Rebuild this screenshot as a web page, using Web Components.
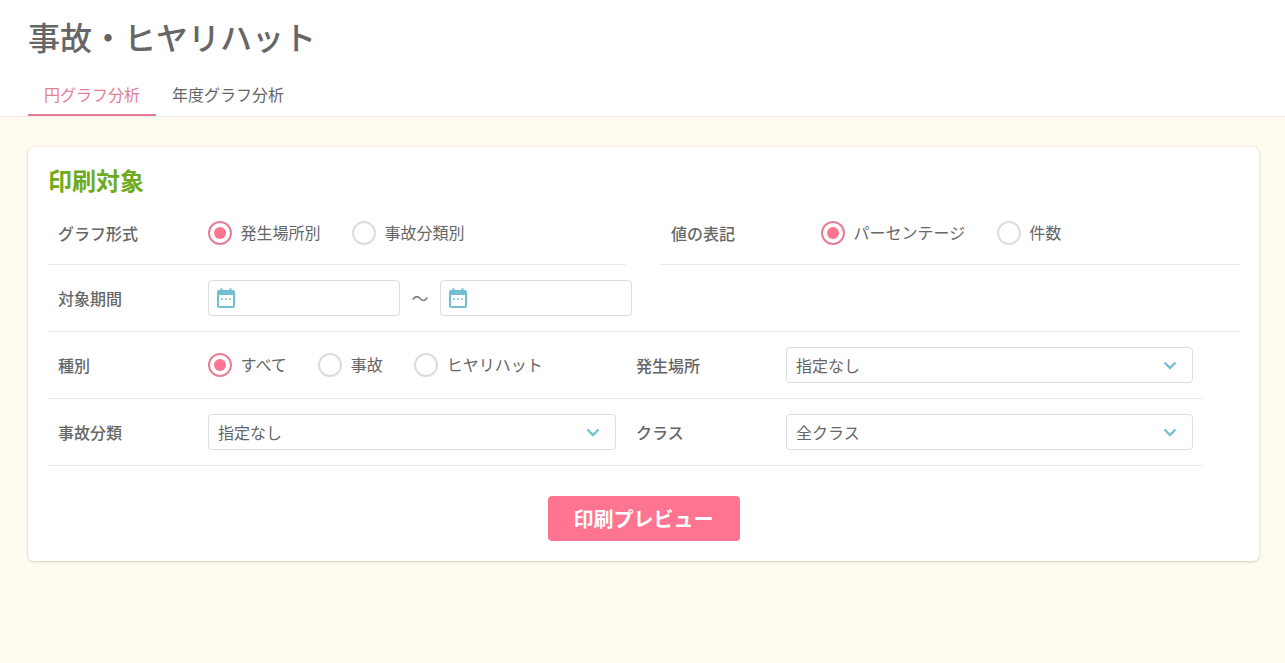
<!DOCTYPE html>
<html lang="ja">
<head>
<meta charset="utf-8">
<title>事故・ヒヤリハット</title>
<style>
  html, body { margin: 0; height: 100%; }
  body {
    background: #fffbf0;
    color: #666;
    font-family: "Noto Sans CJK JP", "Noto Sans", sans-serif;
    overflow: hidden;
  }
</style>
</head>
<body>
<page-header heading="事故・ヒヤリハット">
  <tab-item active>円グラフ分析</tab-item>
  <tab-item>年度グラフ分析</tab-item>
</page-header>

<panel-card heading="印刷対象">
  <div style="display:flex;justify-content:space-between;width:1191px">
    <form-row label="グラフ形式" style="width:578px;padding-top:4px">
      <radio-choice checked>発生場所別</radio-choice>
      <radio-choice>事故分類別</radio-choice>
    </form-row>
    <form-row label="値の表記" style="width:579px;padding-top:4px;padding-left:11px">
      <radio-choice checked>パーセンテージ</radio-choice>
      <radio-choice>件数</radio-choice>
    </form-row>
  </div>
  <form-row label="対象期間" style="width:1191px">
    <date-field></date-field>
    <span style="width:40px;text-align:center;font-size:17px;line-height:36px;color:#777">～</span>
    <date-field></date-field>
  </form-row>
  <div style="display:flex;width:1155px">
    <form-row label="種別" style="width:578px">
      <radio-choice checked>すべて</radio-choice>
      <radio-choice>事故</radio-choice>
      <radio-choice>ヒヤリハット</radio-choice>
    </form-row>
    <form-row label="発生場所" style="width:577px">
      <select-field>指定なし</select-field>
    </form-row>
  </div>
  <div style="display:flex;width:1155px">
    <form-row label="事故分類" style="width:578px">
      <select-field>指定なし</select-field>
    </form-row>
    <form-row label="クラス" style="width:577px">
      <select-field>全クラス</select-field>
    </form-row>
  </div>
  <div style="display:flex;justify-content:center;padding-top:30px;width:1191px">
    <pink-button>印刷プレビュー</pink-button>
  </div>
</panel-card>

<script>
class PageHeader extends HTMLElement {
  constructor() {
    super();
    this.attachShadow({mode: 'open'}).innerHTML = `
      <style>
        :host {
          display: block;
          box-sizing: border-box;
          height: 117px;
          padding: 0 28px;
          background: #fff;
          border-bottom: 1px solid #eeebe4;
        }
        h1 {
          margin: 0;
          padding: 14px 0 0;
          height: 75px;
          box-sizing: border-box;
          font-size: 32px;
          line-height: 44px;
          font-weight: 500;
          color: #666;
        }
        nav { display: flex; height: 41px; align-items: stretch; }
      </style>
      <h1>${this.getAttribute('heading')}</h1>
      <nav><slot></slot></nav>`;
  }
}
customElements.define('page-header', PageHeader);

class TabItem extends HTMLElement {
  constructor() {
    super();
    this.attachShadow({mode: 'open'}).innerHTML = `
      <style>
        :host {
          display: block;
          box-sizing: border-box;
          height: 41px;
          padding: 8px 16px 0;
          font-size: 16px;
          line-height: 22px;
          color: #666;
          border-bottom: 2px solid transparent;
        }
        :host([active]) { color: #e57f95; border-bottom-color: #e57f95; }
      </style>
      <slot></slot>`;
  }
}
customElements.define('tab-item', TabItem);

class PanelCard extends HTMLElement {
  constructor() {
    super();
    this.attachShadow({mode: 'open'}).innerHTML = `
      <style>
        :host {
          display: block;
          box-sizing: border-box;
          width: 1231px;
          height: 414px;
          margin: 30px 0 0 28px;
          padding: 0 20px;
          background: #fff;
          border-radius: 6px;
          box-shadow: 0 0 0 1px rgba(120, 100, 60, .06), 0 1px 3px rgba(120, 100, 60, .22);
        }
        h2 {
          margin: 0;
          padding: 17px 0 0;
          height: 51px;
          box-sizing: border-box;
          font-size: 24px;
          line-height: 32px;
          font-weight: 700;
          color: #6fab1f;
        }
      </style>
      <h2>${this.getAttribute('heading')}</h2>
      <slot></slot>`;
  }
}
customElements.define('panel-card', PanelCard);

class FormRow extends HTMLElement {
  constructor() {
    super();
    this.attachShadow({mode: 'open'}).innerHTML = `
      <style>
        :host {
          display: flex;
          box-sizing: border-box;
          height: 67px;
          align-items: center;
          padding: 0 10px;
          border-bottom: 1px solid #e9e9e9;
          flex: none;
        }
        .label {
          width: 150px;
          flex: none;
          font-size: 16px;
          line-height: 22px;
          font-weight: 500;
          color: #666;
        }
        .controls { display: flex; flex: 1; align-items: center; gap: 31.500px; min-width: 0; }
        ::slotted(date-field), ::slotted(span) { margin-right: -31.500px; }
      </style>
      <div class="label">${this.getAttribute('label')}</div>
      <div class="controls"><slot></slot></div>`;
  }
}
customElements.define('form-row', FormRow);

class RadioChoice extends HTMLElement {
  constructor() {
    super();
    this.attachShadow({mode: 'open'}).innerHTML = `
      <style>
        :host {
          display: inline-flex;
          align-items: center;
          gap: 8.500px;
          font-size: 16px;
          line-height: 22px;
          color: #666;
        }
        .dot {
          width: 24px;
          height: 24px;
          box-sizing: border-box;
          border-radius: 50%;
          border: 2px solid #ddd;
          background: #fff;
          display: flex;
          align-items: center;
          justify-content: center;
        }
        .dot i { display: none; width: 12px; height: 12px; border-radius: 50%; background: #ff7490; }
        :host([checked]) .dot { border-color: #e57f95; }
        :host([checked]) .dot i { display: block; }
        .text { position: relative; top: -1px; }
      </style>
      <span class="dot"><i></i></span><span class="text"><slot></slot></span>`;
  }
}
customElements.define('radio-choice', RadioChoice);

class DateField extends HTMLElement {
  constructor() {
    super();
    this.attachShadow({mode: 'open'}).innerHTML = `
      <style>
        :host {
          display: flex;
          align-items: center;
          box-sizing: border-box;
          width: 192px;
          height: 36px;
          padding-left: 8px;
          background: #fff;
          border: 1px solid #ddd;
          border-radius: 4px;
        }
        svg { display: block; }
      </style>
      <svg width="18" height="20" viewBox="0 0 18 20" aria-hidden="true">
        <rect x="3.500" y="0" width="2" height="4" rx="1" fill="#72bfd2"/>
        <rect x="12.500" y="0" width="2" height="4" rx="1" fill="#72bfd2"/>
        <path fill-rule="evenodd" fill="#72bfd2" d="M2 2h14a2 2 0 0 1 2 2v14a2 2 0 0 1-2 2H2a2 2 0 0 1-2-2V4a2 2 0 0 1 2-2zM2 7v10.500a.5.5 0 0 0 .5.5h13a.5.5 0 0 0 .5-.5V7z"/>
        <rect x="4" y="10" width="2" height="2" fill="#9fd3df"/>
        <rect x="8" y="10" width="2" height="2" fill="#9fd3df"/>
        <rect x="12" y="10" width="2" height="2" fill="#9fd3df"/>
      </svg>`;
  }
}
customElements.define('date-field', DateField);

class SelectField extends HTMLElement {
  constructor() {
    super();
    this.attachShadow({mode: 'open'}).innerHTML = `
      <style>
        :host {
          display: flex;
          align-items: center;
          justify-content: space-between;
          box-sizing: border-box;
          width: 100%;
          height: 36px;
          padding: 0 15px 0 9px;
          background: #fff;
          border: 1px solid #ddd;
          border-radius: 4px;
          font-size: 16px;
          color: #666;
        }
        svg { display: block; }
      </style>
      <span><slot></slot></span>
      <svg width="14" height="9" viewBox="0 0 14 9" aria-hidden="true">
        <path d="M1.500 1.500 7 7l5.500-5.500" fill="none" stroke="#72bfd2" stroke-width="2.400"/>
      </svg>`;
  }
}
customElements.define('select-field', SelectField);

class PinkButton extends HTMLElement {
  constructor() {
    super();
    this.attachShadow({mode: 'open'}).innerHTML = `
      <style>
        :host {
          display: flex;
          align-items: center;
          justify-content: center;
          box-sizing: border-box;
          width: 192px;
          height: 45px;
          background: #ff7490;
          border-radius: 4px;
          color: #fff;
          font-size: 20px;
          font-weight: 700;
        }
      </style>
      <slot></slot>`;
  }
}
customElements.define('pink-button', PinkButton);
</script>
</body>
</html>
